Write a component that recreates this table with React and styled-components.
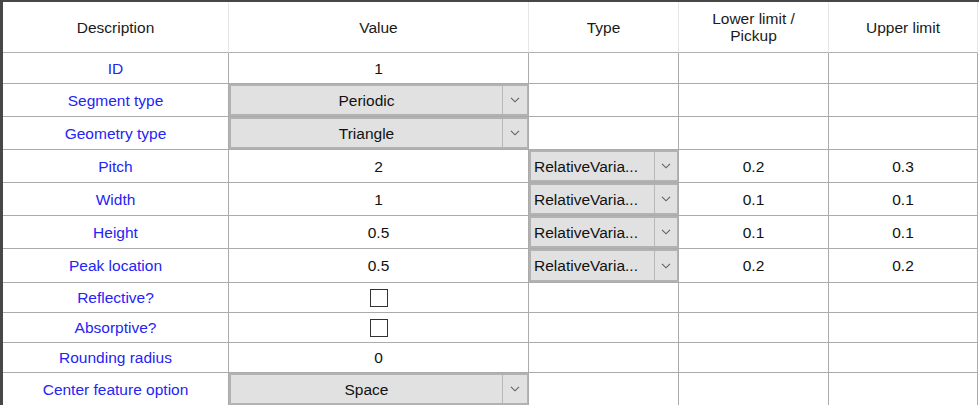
import React from "react";
import styled, { createGlobalStyle } from "styled-components";

const GlobalStyle = createGlobalStyle`
  * { margin: 0; padding: 0; box-sizing: border-box; }
  html, body { width: 100%; height: 100%; background: #ffffff; overflow: hidden; }
  body {
    font-family: "Liberation Sans", Arial, sans-serif;
    font-size: 15.5px;
    color: #000;
  }
`;

const COLS = "226px 300px 150px 150px 149px";

const Grid = styled.div`
  width: 979px;
  border-top: 2px solid #474747;
  border-left: 3px solid #474747;
`;

const Row = styled.div`
  display: grid;
  grid-template-columns: ${COLS};
  height: ${(p) => p.h}px;
`;

const Cell = styled.div`
  display: flex;
  align-items: center;
  justify-content: center;
  text-align: center;
  border-right: 1px solid #ababab;
  border-bottom: 1px solid #ababab;
  color: ${(p) => (p.blue ? "#2424f5" : "#111")};
  line-height: 17px;
  overflow: hidden;
  white-space: nowrap;
`;

const HeadCell = styled(Cell)`
  border-right-color: #e6e6e6;
  border-bottom-color: #b0b0b0;
  white-space: normal;
  color: #1a1a1a;
`;

const ComboBox = styled.div`
  flex: 1;
  align-self: stretch;
  display: flex;
  background: #e1e1e1;
  border: 2px solid #b2b2b2;
  border-right-width: 1px;
`;

const ComboText = styled.div`
  flex: 1;
  display: flex;
  align-items: center;
  justify-content: ${(p) => (p.left ? "flex-start" : "center")};
  padding-left: ${(p) => (p.left ? "3px" : "0")};
  color: #111;
  overflow: hidden;
`;

const ComboButton = styled.div`
  width: ${(p) => p.w}px;
  display: flex;
  align-items: center;
  justify-content: center;
  border-left: 1px solid #b8b8b8;
`;

const CheckBox = styled.div`
  width: 18px;
  height: 18px;
  border: 1px solid #333;
  background: #fff;
`;

const Chevron = () => (
  <svg width="10" height="6" viewBox="0 0 10 6">
    <path d="M1 0.8 L5 4.8 L9 0.8" fill="none" stroke="#606060" strokeWidth="1.1" />
  </svg>
);

const Combo = ({ text, left, btn }) => (
  <ComboBox>
    <ComboText left={left}>{text}</ComboText>
    <ComboButton w={btn}>
      <Chevron />
    </ComboButton>
  </ComboBox>
);

const typeCombo = <Combo text="RelativeVaria..." left btn={23} />;

const rows = [
  { h: 31, d: "ID", v: "1" },
  { h: 33, d: "Segment type", v: <Combo text="Periodic" btn={25} /> },
  { h: 33, d: "Geometry type", v: <Combo text="Triangle" btn={25} /> },
  { h: 33, d: "Pitch", v: "2", t: typeCombo, lo: "0.2", up: "0.3" },
  { h: 33, d: "Width", v: "1", t: typeCombo, lo: "0.1", up: "0.1" },
  { h: 33, d: "Height", v: "0.5", t: typeCombo, lo: "0.1", up: "0.1" },
  { h: 34, d: "Peak location", v: "0.5", t: typeCombo, lo: "0.2", up: "0.2" },
  { h: 30, d: "Reflective?", v: <CheckBox /> },
  { h: 30, d: "Absorptive?", v: <CheckBox /> },
  { h: 30, d: "Rounding radius", v: "0" },
  { h: 33, d: "Center feature option", v: <Combo text="Space" btn={25} /> },
];

export default function App() {
  return (
    <>
      <GlobalStyle />
      <Grid>
        <Row h={51}>
          <HeadCell>Description</HeadCell>
          <HeadCell>Value</HeadCell>
          <HeadCell>Type</HeadCell>
          <HeadCell>
            Lower limit /<br />
            Pickup
          </HeadCell>
          <HeadCell>Upper limit</HeadCell>
        </Row>
        {rows.map((r) => (
          <Row key={r.d} h={r.h}>
            <Cell blue>{r.d}</Cell>
            <Cell>{r.v}</Cell>
            <Cell>{r.t}</Cell>
            <Cell>{r.lo}</Cell>
            <Cell>{r.up}</Cell>
          </Row>
        ))}
      </Grid>
    </>
  );
}
